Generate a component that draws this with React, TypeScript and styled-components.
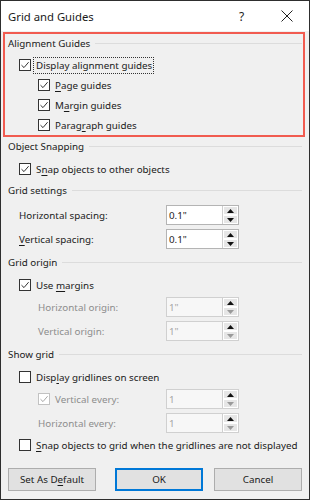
import React from "react"
import styled, { createGlobalStyle, css } from "styled-components"

const GlobalStyle = createGlobalStyle`
  html, body {
    margin: 0;
    padding: 0;
    background: #f0f0f0;
  }
  * {
    box-sizing: border-box;
  }
`

const Window = styled.div`
  width: 310px;
  height: 500px;
  border: 1px solid #2e2e2e;
  background: #f0f0f0;
  display: flex;
  flex-direction: column;
  font-family: "Segoe UI", "Noto Sans", sans-serif;
  font-size: 9.8px;
  color: #1a1a1a;
  overflow: hidden;
`

const TitleBar = styled.div`
  height: 30px;
  background: #ffffff;
  display: flex;
  align-items: center;
  padding-left: 7px;
  flex-shrink: 0;
`

const TitleText = styled.span`
  font-size: 11.3px;
  flex: 1;
`

const TitleButton = styled.span`
  width: 45px;
  display: flex;
  justify-content: center;
  align-items: center;
  font-size: 12px;
  color: #222;
`

const Highlight = styled.div`
  margin: 1px 4px 0 2px;
  border: 2px solid #f15b50;
  padding: 0 1px 0 3px;
`

const Section = styled.div<{ $first?: boolean }>`
  padding: ${(p) => (p.$first ? "0" : "2px")} 7px 0 7px;
`

const HeaderRow = styled.div`
  height: 18px;
  display: flex;
  align-items: center;
  gap: 5px;
  &::after {
    content: "";
    flex: 1;
    height: 1px;
    background: #dcdcdc;
  }
`

const Content = styled.div<{ $tight?: boolean }>`
  margin-top: ${(p) => (p.$tight ? 3 : 4)}px;
  display: flex;
  flex-direction: column;
`

const CheckRow = styled.label<{ $indent: number }>`
  height: 20px;
  display: flex;
  align-items: center;
  padding-left: ${(p) => p.$indent}px;
  gap: 5px;
`

const Box = styled.span<{ $disabled?: boolean }>`
  width: 12px;
  height: 12px;
  background: #fff;
  border: 1px solid ${(p) => (p.$disabled ? "#c2c2c2" : "#333")};
  display: flex;
  align-items: center;
  justify-content: center;
  flex-shrink: 0;
`

const LabelText = styled.span<{ $disabled?: boolean; $focus?: boolean }>`
  color: ${(p) => (p.$disabled ? "#8d8d8d" : "#1a1a1a")};
  white-space: nowrap;
  ${(p) =>
    p.$focus &&
    css`
      outline: 1px dotted #333;
      outline-offset: 1px;
      margin-left: -1px;
      padding-left: 1px;
    `}
  u {
    text-decoration-thickness: 1px;
    text-underline-offset: 2px;
  }
`

const InputRow = styled.div<{ $indent: number }>`
  height: 24px;
  width: 231px;
  display: grid;
  grid-template-columns: 1fr 73px;
  align-items: center;
  padding-left: ${(p) => p.$indent}px;
`

const Spin = styled.div<{ $disabled?: boolean }>`
  height: 20px;
  display: grid;
  grid-template-columns: 1fr 16px;
  border: 1px solid ${(p) => (p.$disabled ? "#d0d0d0" : "#b4b4b4")};
  background: ${(p) => (p.$disabled ? "#f7f7f7" : "#ffffff")};
`

const SpinValue = styled.span<{ $disabled?: boolean }>`
  padding-left: 2px;
  display: flex;
  align-items: center;
  color: ${(p) => (p.$disabled ? "#a6a6a6" : "#1a1a1a")};
`

const SpinButtons = styled.div`
  display: grid;
  grid-template-rows: 1fr 1fr;
  border-left: 1px solid #cfcfcf;
`

const SpinButton = styled.span<{ $dim?: boolean }>`
  display: flex;
  align-items: center;
  justify-content: center;
  background: #e6e6e6;
  border: 1px solid #ffffff;
  svg {
    fill: ${(p) => (p.$dim ? "#9a9a9a" : "#111")};
  }
`

const Footer = styled.div`
  margin-top: 13px;
  padding: 0 7px;
  display: flex;
  gap: 18px;
  & > :nth-child(2) {
    margin-left: auto;
  }
  & > :nth-child(3) {
    margin-left: -7px;
  }
`

const Button = styled.button<{ $primary?: boolean }>`
  width: 88px;
  height: 23px;
  font-family: inherit;
  font-size: 9.8px;
  color: #1a1a1a;
  background: #e1e1e1;
  border: ${(p) => (p.$primary ? "2px solid #0078d7" : "1px solid #adadad")};
  padding: 0;
  u {
    text-underline-offset: 2px;
  }
`

const Tick = ({ color = "#333" }: { color?: string }) => (
  <svg width="10" height="10" viewBox="0 0 10 10">
    <path d="M1.5 5.2 L4 7.6 L8.6 2.2" stroke={color} strokeWidth="1" fill="none" />
  </svg>
)

const Check = ({
  indent,
  checked,
  disabled,
  focus,
  children,
}: {
  indent: number
  checked?: boolean
  disabled?: boolean
  focus?: boolean
  children: React.ReactNode
}) => (
  <CheckRow $indent={indent}>
    <Box $disabled={disabled}>{checked && <Tick color={disabled ? "#a8a8a8" : "#333"} />}</Box>
    <LabelText $disabled={disabled} $focus={focus}>
      {children}
    </LabelText>
  </CheckRow>
)

const Arrow = ({ up }: { up?: boolean }) => (
  <svg width="7" height="4" viewBox="0 0 7 4">
    <path d={up ? "M0 4 L3.5 0 L7 4 Z" : "M0 0 L7 0 L3.5 4 Z"} />
  </svg>
)

const Spinner = ({
  indent,
  label,
  value,
  disabled,
}: {
  indent: number
  label: React.ReactNode
  value: string
  disabled?: boolean
}) => (
  <InputRow $indent={indent}>
    <LabelText $disabled={disabled}>{label}</LabelText>
    <Spin $disabled={disabled}>
      <SpinValue $disabled={disabled}>{value}</SpinValue>
      <SpinButtons>
        <SpinButton>
          <Arrow up />
        </SpinButton>
        <SpinButton $dim={disabled}>
          <Arrow />
        </SpinButton>
      </SpinButtons>
    </Spin>
  </InputRow>
)

const Header = ({ children }: { children: React.ReactNode }) => <HeaderRow>{children}</HeaderRow>

export default function App() {
  return (
    <>
      <GlobalStyle />
      <Window>
        <TitleBar>
          <TitleText>Grid and Guides</TitleText>
          <TitleButton>?</TitleButton>
          <TitleButton>
            <svg width="12" height="12" viewBox="0 0 12 12">
              <path d="M0.5 0.5 L11.5 11.5 M11.5 0.5 L0.5 11.5" stroke="#222" strokeWidth="1" />
            </svg>
          </TitleButton>
        </TitleBar>

        <Highlight>
          <Header>Alignment Guides</Header>
          <Content $tight>
            <Check indent={11} checked focus>
              Display alignment guides
            </Check>
            <Check indent={30} checked>
              <u>P</u>age guides
            </Check>
            <Check indent={30} checked>
              M<u>a</u>rgin guides
            </Check>
            <Check indent={30} checked>
              Parag<u>r</u>aph guides
            </Check>
          </Content>
        </Highlight>

        <Section $first>
          <Header>Object Snapping</Header>
          <Content>
            <Check indent={11} checked>
              S<u>n</u>ap objects to other objects
            </Check>
          </Content>
        </Section>

        <Section>
          <Header>Grid settings</Header>
          <Content>
            <Spinner indent={11} label="Horizontal spacing:" value={'0.1"'} />
            <Spinner
              indent={11}
              label={
                <>
                  <u>V</u>ertical spacing:
                </>
              }
              value={'0.1"'}
            />
          </Content>
        </Section>

        <Section>
          <Header>Grid origin</Header>
          <Content>
            <Check indent={11} checked>
              Use <u>m</u>argins
            </Check>
            <Spinner indent={30} label="Horizontal origin:" value={'1"'} disabled />
            <Spinner indent={30} label="Vertical origin:" value={'1"'} disabled />
          </Content>
        </Section>

        <Section>
          <Header>Show grid</Header>
          <Content>
            <Check indent={11}>
              Disp<u>l</u>ay gridlines on screen
            </Check>
            <Spinner
              indent={30}
              label={
                <Check indent={0} checked disabled>
                  Vertical every:
                </Check>
              }
              value="1"
              disabled
            />
            <Spinner indent={30} label="Horizontal every:" value="1" disabled />
            <Check indent={11}>
              <u>S</u>nap objects to grid when the gridlines are not displayed
            </Check>
          </Content>
        </Section>

        <Footer>
          <Button>
            Set As D<u>e</u>fault
          </Button>
          <Button $primary>OK</Button>
          <Button>Cancel</Button>
        </Footer>
      </Window>
    </>
  )
}
